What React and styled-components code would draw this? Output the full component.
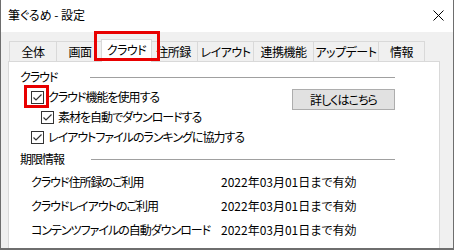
import React from 'react';
import styled, { createGlobalStyle } from 'styled-components';

const GlobalStyle = createGlobalStyle`
  body {
    margin: 0;
    font-family: "Noto Sans CJK JP", "Noto Sans", sans-serif;
    font-size: 12px;
    font-feature-settings: "palt" 1;
    letter-spacing: -1px;
    color: #000;
  }
`;

const Window = styled.div`
  width: 454px;
  height: 250px;
  box-sizing: border-box;
  display: flex;
  flex-direction: column;
  border: 1px solid #6e6e6e;
  border-top: none;
  border-bottom-width: 2px;
  background: #f0f0f0;
`;

const TitleBar = styled.div`
  height: 30px;
  flex: none;
  display: flex;
  align-items: center;
  justify-content: space-between;
  padding: 0 9px 2px 7px;
  background: #fff;
`;

const Title = styled.span`
  font-size: 12px;
  line-height: 16px;
  letter-spacing: 0;
`;

const Body = styled.div`
  flex: 1;
  display: flex;
  flex-direction: column;
  padding: 7px 13px 0 7px;
  min-height: 0;
`;

const TabStrip = styled.div`
  display: flex;
  align-items: flex-end;
  height: 22px;
  padding-left: 1px;
  flex: none;
`;

const Tab = styled.div`
  position: relative;
  box-sizing: border-box;
  width: ${p => p.$w}px;
  height: 20px;
  display: flex;
  justify-content: center;
  align-items: center;
  border: 1px solid #d9d9d9;
  border-bottom: none;
  margin-right: -1px;
  background: #f0f0f0;
  white-space: nowrap;
  line-height: 16px;
  padding-top: 1px;
  letter-spacing: -0.5px;

  &.active {
    width: ${p => p.$w + 4}px;
    height: 23px;
    margin: 0 -3px -1px -2px;
    background: #fff;
    z-index: 2;
    align-items: flex-start;
    padding-top: 2px;
  }
`;

const Highlight = styled.span`
  position: absolute;
  top: ${p => p.$t}px;
  left: ${p => p.$l}px;
  width: ${p => p.$w}px;
  height: ${p => p.$h}px;
  box-sizing: border-box;
  border: 3px solid #e80000;
  pointer-events: none;
`;

const Panel = styled.div`
  flex: 1;
  background: #fff;
  border: 1px solid #d9d9d9;
  border-bottom: none;
  padding: 7px 44px 0 11px;
`;

const SectionHeader = styled.div`
  display: flex;
  align-items: center;
  gap: ${p => p.$gap}px;
  height: 16px;
  line-height: 16px;
  margin-top: ${p => p.$mt || 0}px;

  &::after {
    content: '';
    flex: 1;
    height: 1px;
    background: #a0a0a0;
  }
`;

const CheckRow = styled.div`
  display: flex;
  align-items: center;
  justify-content: space-between;
  height: 20px;
  padding-left: ${p => p.$indent}px;
  margin-top: ${p => p.$mt || 0}px;
`;

const CheckLabel = styled.label`
  display: flex;
  align-items: center;
  gap: 4px;
  line-height: 16px;
  white-space: nowrap;
`;

const Box = styled.span`
  position: relative;
  width: 13px;
  height: 13px;
  box-sizing: border-box;
  border: 1px solid #333;
  background: #fff;
  display: flex;
  align-items: center;
  justify-content: center;
`;

const Button = styled.button`
  align-self: flex-start;
  margin: 2px 0 -3px;
  width: 103px;
  height: 21px;
  background: #e1e1e1;
  border: 1px solid #adadad;
  font: inherit;
  font-size: 12px;
  line-height: 16px;
  letter-spacing: -1px;
  padding: 0;
  color: #000;
`;

const InfoList = styled.div`
  margin-top: 3px;
  padding-left: 11px;
`;

const InfoRow = styled.div`
  display: grid;
  grid-template-columns: 190px 1fr;
  height: 24px;
  align-items: center;
  line-height: 16px;
  white-space: nowrap;
`;

const DateText = styled.span`
  letter-spacing: 0;
`;

const Checkbox = ({ highlight }) => (
  <Box>
    <svg width="11" height="11" viewBox="0 0 11 11">
      <path d="M1.5 5.5 L4 8 L9.5 2.5" fill="none" stroke="#333" strokeWidth="1.2" />
    </svg>
    {highlight && <Highlight $t={-7} $l={-8} $w={25} $h={23} />}
  </Box>
);

const tabs = [
  ['全体', 48],
  ['画面', 48],
  ['クラウド', 47],
  ['住所録', 49],
  ['レイアウト', 57],
  ['連携機能', 61],
  ['アップデート', 66],
  ['情報', 47],
];

const info = [
  'クラウド住所録のご利用',
  'クラウドレイアウトのご利用',
  'コンテンツファイルの自動ダウンロード',
];

export default function App() {
  return (
    <>
      <GlobalStyle />
      <Window>
        <TitleBar>
          <Title>筆ぐるめ - 設定</Title>
          <svg width="11" height="11" viewBox="0 0 11 11">
            <path d="M0.5 0.5 L10.5 10.5 M10.5 0.5 L0.5 10.5" stroke="#000" strokeWidth="1" />
          </svg>
        </TitleBar>
        <Body>
          <TabStrip>
            {tabs.map(([label, w]) => (
              <Tab key={label} $w={w} className={label === 'クラウド' ? 'active' : ''}>
                {label}
                {label === 'クラウド' && <Highlight $t={-9} $l={-8} $w={66} $h={30} />}
              </Tab>
            ))}
          </TabStrip>
          <Panel>
            <SectionHeader $gap={33}>クラウド</SectionHeader>
            <CheckRow $indent={11} $mt={2}>
              <CheckLabel>
                <Checkbox highlight />
                クラウド機能を使用する
              </CheckLabel>
              <Button>詳しくはこちら</Button>
            </CheckRow>
            <CheckRow $indent={21}>
              <CheckLabel>
                <Checkbox />
                素材を自動でダウンロードする
              </CheckLabel>
            </CheckRow>
            <CheckRow $indent={11}>
              <CheckLabel>
                <Checkbox />
                レイアウトファイルのランキングに協力する
              </CheckLabel>
            </CheckRow>
            <SectionHeader $gap={27} $mt={4}>期限情報</SectionHeader>
            <InfoList>
              {info.map(label => (
                <InfoRow key={label}>
                  <span>{label}</span>
                  <DateText>2022年03月01日まで有効</DateText>
                </InfoRow>
              ))}
            </InfoList>
          </Panel>
        </Body>
      </Window>
    </>
  );
}
